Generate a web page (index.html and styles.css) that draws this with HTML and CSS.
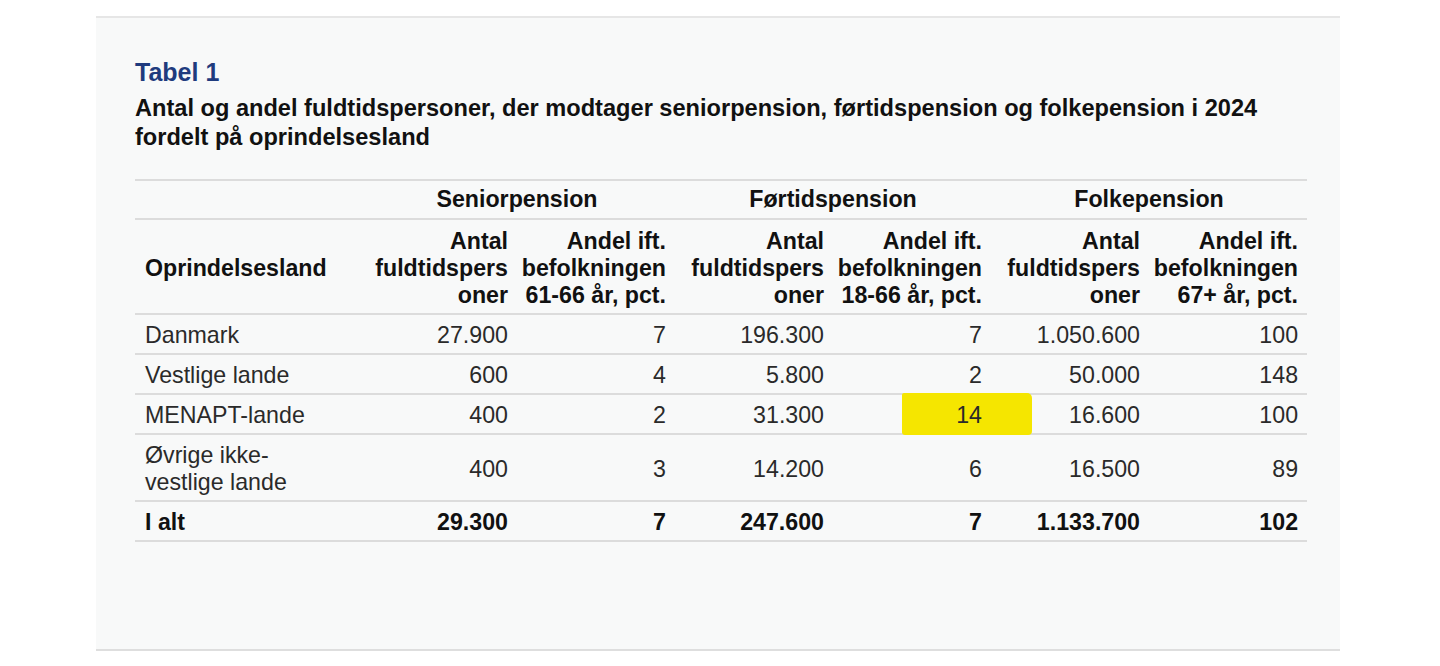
FILE: index.html
```html
<!DOCTYPE html>
<html lang="da">
<head>
<meta charset="utf-8">
<title>Tabel 1</title>
<link rel="stylesheet" href="styles.css">
</head>
<body>
<div class="panel">
  <h2 class="title">Tabel 1</h2>
  <p class="subtitle">Antal og andel fuldtidspersoner, der modtager seniorpension, førtidspension og folkepension i 2024<br>fordelt på oprindelsesland</p>
  <table class="data">
    <colgroup>
      <col class="c-first">
      <col class="c-num"><col class="c-num"><col class="c-num"><col class="c-num"><col class="c-num"><col class="c-num">
    </colgroup>
    <thead>
      <tr class="group">
        <th></th>
        <th colspan="2">Seniorpension</th>
        <th colspan="2">Førtidspension</th>
        <th colspan="2">Folkepension</th>
      </tr>
      <tr class="cols">
        <th class="lbl">Oprindelsesland</th>
        <th>Antal<br>fuldtidspers<br>oner</th>
        <th>Andel ift.<br>befolkningen<br>61-66 år, pct.</th>
        <th>Antal<br>fuldtidspers<br>oner</th>
        <th>Andel ift.<br>befolkningen<br>18-66 år, pct.</th>
        <th>Antal<br>fuldtidspers<br>oner</th>
        <th>Andel ift.<br>befolkningen<br>67+ år, pct.</th>
      </tr>
    </thead>
    <tbody>
      <tr>
        <td class="lbl">Danmark</td>
        <td>27.900</td><td>7</td><td>196.300</td><td>7</td><td>1.050.600</td><td>100</td>
      </tr>
      <tr>
        <td class="lbl">Vestlige lande</td>
        <td>600</td><td>4</td><td>5.800</td><td>2</td><td>50.000</td><td>148</td>
      </tr>
      <tr>
        <td class="lbl">MENAPT-lande</td>
        <td>400</td><td>2</td><td>31.300</td>
        <td class="marked"><span class="mark"></span><span class="val">14</span></td>
        <td>16.600</td><td>100</td>
      </tr>
      <tr>
        <td class="lbl">Øvrige ikke-<br>vestlige lande</td>
        <td>400</td><td>3</td><td>14.200</td><td>6</td><td>16.500</td><td>89</td>
      </tr>
      <tr class="total">
        <td class="lbl">I alt</td>
        <td>29.300</td><td>7</td><td>247.600</td><td>7</td><td>1.133.700</td><td>102</td>
      </tr>
    </tbody>
  </table>
</div>
</body>
</html>
```

FILE: styles.css
```css
html, body {
  margin: 0;
  padding: 0;
  background: #ffffff;
}

body {
  font-family: "Liberation Sans", Arial, sans-serif;
  color: #1e1e1e;
}

.panel {
  box-sizing: border-box;
  margin: 16px 0 0 96px;
  width: 1244px;
  height: 635px;
  background: #f8f9f9;
  border-top: 2px solid #e6e6e6;
  border-bottom: 2px solid #dedede;
  padding: 40px 32px 0 39px;
}

.title {
  margin: 0;
  font-size: 25px;
  line-height: 28px;
  font-weight: bold;
  color: #1f3b7e;
}

.subtitle {
  margin: 8px 0 0;
  font-size: 23.6px;
  line-height: 29px;
  font-weight: bold;
  color: #111111;
}

.data {
  margin-top: 27px;
  border-collapse: separate;
  border-spacing: 0;
  table-layout: fixed;
  width: 1172px;
  border-top: 2px solid #dcdcdc;
  font-size: 23.2px;
  line-height: 27px;
}

.c-first { width: 224px; }
.c-num { width: 158px; }

.data th,
.data td {
  border-bottom: 2px solid #dcdcdc;
  padding: 7px 9px 4px 0;
  text-align: right;
  vertical-align: middle;
  white-space: nowrap;
}

.data th {
  font-weight: bold;
  color: #111111;
}

.data .lbl {
  text-align: left;
  padding-left: 10px;
}

.data .group th {
  text-align: center;
  padding: 5px 0 5px 0;
}

.data .cols th {
  padding-top: 8px;
  padding-bottom: 4px;
}

.data td {
  color: #2a2a2a;
}

.data .total td {
  font-weight: bold;
  color: #111111;
}

.marked {
  position: relative;
}

.mark {
  position: absolute;
  left: 69px;
  top: -2px;
  width: 130px;
  height: 42px;
  background: #f5e600;
  border-radius: 2px 5px 4px 3px;
  z-index: 1;
}

.val {
  position: relative;
  z-index: 2;
}
```
